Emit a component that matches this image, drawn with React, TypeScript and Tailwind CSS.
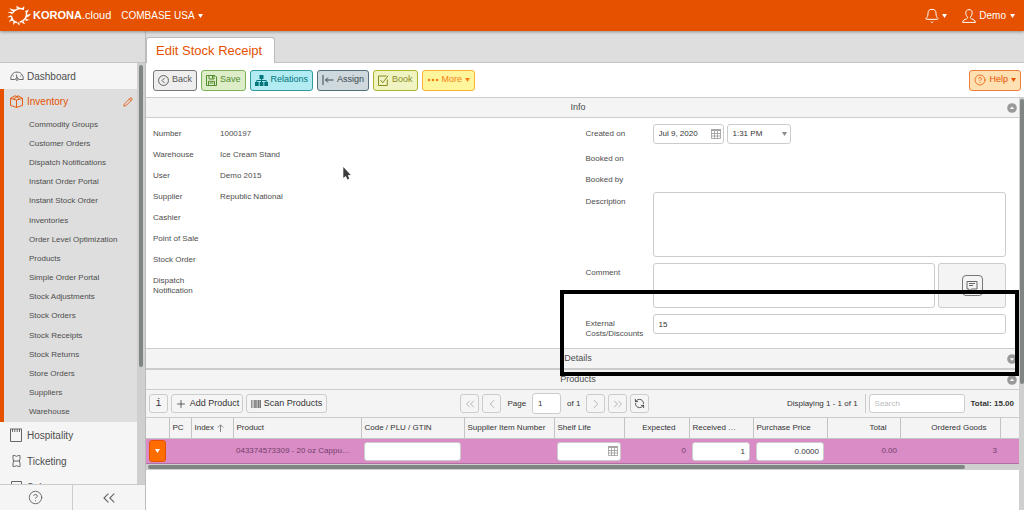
import React, { useState } from "react";
import {
  Bell,
  ChevronLeft,
  ChevronRight,
  ChevronsLeft,
  ChevronsRight,
  CircleHelp,
  Pencil,
  Plus,
  RefreshCcw,
} from "lucide-react";

// ---------- Small helpers ----------
const cx = (...list: (string | boolean | undefined)[]) => list.filter(Boolean).join(" ");

// ---------- Data ----------
const inventoryItems = [
  "Commodity Groups",
  "Customer Orders",
  "Dispatch Notifications",
  "Instant Order Portal",
  "Instant Stock Order",
  "Inventories",
  "Order Level Optimization",
  "Products",
  "Simple Order Portal",
  "Stock Adjustments",
  "Stock Orders",
  "Stock Receipts",
  "Stock Returns",
  "Store Orders",
  "Suppliers",
  "Warehouse",
];

const infoRows = [
  ["Number", "1000197"],
  ["Warehouse", "Ice Cream Stand"],
  ["User", "Demo 2015"],
  ["Supplier", "Republic National"],
  ["Cashier", ""],
  ["Point of Sale", ""],
  ["Stock Order", ""],
  ["Dispatch Notification", ""],
];

// ---------- Icons ----------
const Caret = ({ className }: { className?: string }) => (
  <svg viewBox="0 0 5 4" className={cx("h-[4px] w-[5px] shrink-0", className)} fill="currentColor" aria-hidden="true">
    <path d="M0 0h5L2.5 4z" />
  </svg>
);

// Corona ring with flames swept clockwise
const Logo = () => (
  <svg viewBox="0 0 26 22" className="h-[22px] w-[26px] shrink-0" aria-hidden="true">
    <path
      d="M6.500 8C8.500 4.200 13.500 2.600 17.500 4.300M20.300 7.500c1.300 4-1.600 8.600-6.600 9.800M11 17.400C7.800 16.800 5.600 14.400 5.600 11.300"
      fill="none"
      stroke="#fff"
      strokeWidth="1.500"
    />
    <path
      d="M8 6.500Q4.500 6 3.500 3q2.500 1.800 5.500 1.600zM11.500 4.200Q10 2.500 10.600.6q1.200 2 3.600 2.400zM15.500 3.500q1.600-.6 2.600-2.500.6 2.400-.4 4zM19 6q2 0 3.800-1.800-.6 2.800-2.400 4.200zM20.800 9.600q2 .2 4.200-1-1.200 2.800-3.800 3.600zM20.500 13.400q1.200 1.400 3.400 1.200-2.400 1.600-4.800.8zM17.600 16.200q.2 1.600 1.800 2.800-2.600-.2-3.800-1.800zM13.500 17.400q-.6 1.800.4 3.400-2.400-1.200-2.800-3.200zM10 17.200q-2 .8-2.600 3-.8-2.400.6-4zM7 15.200q-2.400.2-3.800 2.400 0-2.800 2.600-4.400zM5.600 12.400q-2.200-.8-4.400.6 1.400-2.800 4.200-2.800zM6.200 9.400q-1.600-2-4.400-2 2.400-1.400 5 .2z"
      fill="#fff"
    />
  </svg>
);

const GaugeIcon = () => (
  <svg viewBox="0 0 14 10" className="h-[10px] w-[14px]" fill="none" stroke="#666" aria-hidden="true">
    <path d="M.8 8.500C.4 4.200 3.200 1.100 7 1.100s6.600 3.100 6.200 7.400H9.200M.8 8.500h4M7.200 7.500 6.400 3.500M2.600 4.300l1.200 1M11.400 4.300l-1.200 1" />
    <circle cx="7" cy="8" r="1.300" />
  </svg>
);

const BoxIcon = () => (
  <svg viewBox="0 0 14 14" className="mr-[4px] h-[13px] w-[13px] shrink-0" fill="none" stroke="currentColor" aria-hidden="true">
    <path d="M.6 3.600 7 5.500l6.400-1.900v7.600L7 13.400.6 11.200zM7 5.500v7.900M.6 3.600 5.400.8 7 1.600 8.600.8l4.800 2.800M3.600 4.400 8.200 1.400M10.400 4.400 7 1.600" />
  </svg>
);

const HospitalityIcon = () => (
  <svg viewBox="0 0 12 14" className="h-[14px] w-[12px]" fill="none" stroke="#666" aria-hidden="true">
    <path d="M.5 1v12.500h11V1M0 1h12M2.500 1v3M4.800 1v3M7.200 1v3M9.500 1v3" />
  </svg>
);

const TicketIcon = () => (
  <svg viewBox="0 0 9 12" className="ml-[2px] h-[12px] w-[9px]" fill="none" stroke="#666" aria-hidden="true">
    <path d="M1 .5h1.500q2 1.600 4 0H8v3.200q-1.400 2.300 0 4.600v3.200H6.500q-2-1.600-4 0H1V8.300q1.400-2.300 0-4.600zM2 6h5" />
  </svg>
);

const ReceiptIcon = () => (
  <svg viewBox="0 0 11 12" className="ml-px h-[12px] w-[11px]" fill="none" stroke="#666" aria-hidden="true">
    <path d="M.5 3V.5h10V3M1.500 3v8.500h8V3M3 3.500h5M3 6h5" />
  </svg>
);

const UserIcon = () => (
  <svg viewBox="0 0 14 14" className="h-[14px] w-[14px]" fill="none" stroke="currentColor" aria-hidden="true">
    <path d="M7 .6c-2.200 0-3.400 1.500-3.200 3.600.2 1.800.8 3 1.800 3.900.2 1-.2 1.400-1.200 1.800-2 .7-3.600 1.300-3.800 3.500h12.800c-.2-2.200-1.800-2.800-3.800-3.500-1-.4-1.400-.8-1.200-1.800 1-.9 1.600-2.100 1.800-3.900C10.400 2.100 9.200.6 7 .6z" />
  </svg>
);

const BackIcon = () => (
  <svg viewBox="0 0 12 12" className="h-[11px] w-[11px]" fill="none" stroke="currentColor" aria-hidden="true">
    <circle cx="6" cy="6" r="5.400" />
    <path d="M7.200 3.200 4.400 6l2.800 2.800" />
  </svg>
);

const SaveIcon = () => (
  <svg viewBox="0 0 11 11" className="h-[11px] w-[11px]" fill="none" stroke="currentColor" aria-hidden="true">
    <path d="M.5.5h8.500l1.500 1.500v8.500H.5zM3 .5v3.500h5V.5M6.500 1v2.500M2.500 10.500V6.300h6v4.200M3.500 8h4" />
  </svg>
);

const RelationsIcon = () => (
  <svg viewBox="0 0 13 11" className="h-[11px] w-[13px]" aria-hidden="true">
    <path d="M4.500 0h4v4h-4zM0 7h3.700v4H0zM4.700 7h3.700v4H4.700zM9.300 7H13v4H9.300z" fill="currentColor" />
    <path d="M6.500 4v3M1.800 7V5.500h9.400V7" stroke="currentColor" fill="none" />
  </svg>
);

const AssignIcon = () => (
  <svg viewBox="0 0 12 10" className="h-[10px] w-[12px]" fill="none" stroke="currentColor" aria-hidden="true">
    <path d="M1 0v10M11.500 5H3.500M6 2.500 3.500 5 6 7.500" />
  </svg>
);

const BookIcon = () => (
  <svg viewBox="0 0 11 11" className="h-[11px] w-[11px]" fill="none" stroke="currentColor" aria-hidden="true">
    <path d="M8.500 1h-8v9.500h8.800V4.500M2.500 5l2.200 2.800L10 .8" />
  </svg>
);

const DotsIcon = () => (
  <svg viewBox="0 0 12 4" className="h-[4px] w-[12px]" fill="currentColor" aria-hidden="true">
    <circle cx="2" cy="2" r="1.300" />
    <circle cx="6" cy="2" r="1.300" />
    <circle cx="10" cy="2" r="1.300" />
  </svg>
);

const CalendarIcon = () => (
  <svg viewBox="0 0 10 10" className="h-[10px] w-[10px] shrink-0" fill="none" aria-hidden="true">
    <path d="M0 1h10" stroke="#888" strokeWidth="1.500" />
    <path d="M.5 2v7.500h9V2M.5 4.500h9M.5 7h9M3.500 2v7.500M6.500 2v7.500" stroke="#999" strokeWidth="0.800" />
  </svg>
);

const CommentIcon = () => (
  <svg viewBox="0 0 12 12" className="h-[12px] w-[12px]" fill="none" stroke="#666" aria-hidden="true">
    <path d="M1 1.500h10v7.500H5.500L3 11V9H1zM3 3.500h6M3 5.500h4" />
  </svg>
);

const BarcodeIcon = () => (
  <svg viewBox="0 0 10 8" className="h-[8px] w-[10px]" fill="#777" aria-hidden="true">
    <path d="M0 0h.8v8H0zM1.600 0h.8v8h-.8zM3.200 0h1.600v8H3.200zM5.300 0h1.200v8H5.300zM7 0h1v8H7zM8.400 0H10v8H8.400z" />
  </svg>
);

const SortArrow = () => (
  <svg viewBox="0 0 7 8" className="h-[8px] w-[7px]" fill="none" stroke="#888" aria-hidden="true">
    <path d="M3.500 8V1M.8 3.500 3.500.8l2.700 2.700" />
  </svg>
);

// Round collapse / expand handle of a section header
const Toggle = ({ open }: { open: boolean }) => (
  <svg viewBox="0 0 10 10" className="h-[10px] w-[10px]" aria-hidden="true">
    <circle cx="5" cy="5" r="4.800" fill="#999" />
    <path d={open ? "M2.800 6h4.400L5 3.400z" : "M2.800 4.200h4.400L5 6.800z"} fill="#fff" />
  </svg>
);

// ---------- UI atoms ----------
const NavItem = ({ icon, label }: { icon: React.ReactNode; label: string }) => (
  <a href="#" className="flex h-[26px] shrink-0 items-center pl-[10px] text-[10px]">
    <span className="w-[17px]">{icon}</span>
    {label}
  </a>
);

const ToolButton = ({ className, children }: { className: string; children: React.ReactNode }) => (
  <button className={cx("flex h-[21px] items-center gap-[3px] rounded-[3px] border px-1 text-[9px]", className)}>
    {children}
  </button>
);

const GridButton = ({ label, className, children }: { label?: string; className?: string; children: React.ReactNode }) => (
  <button
    aria-label={label}
    className={cx("flex h-[19px] items-center justify-center gap-[3px] rounded-[3px] border border-[#ccc] bg-[#f5f5f5]", className)}
  >
    {children}
  </button>
);

const SectionHeader = ({ title, open, className }: { title: string; open: boolean; className?: string }) => (
  <div className={cx("flex items-center bg-[#f4f4f4] pr-[2px]", className)}>
    <h2 className="flex-1 pl-[3px] text-center text-[9px]">{title}</h2>
    <button aria-label={"Toggle " + title} className="leading-none">
      <Toggle open={open} />
    </button>
  </div>
);

const box = "rounded-[3px] border border-[#ccc] bg-white text-[8px] text-[#333] outline-none";

// ---------- Page parts ----------
const TopBar = () => (
  <header className="relative z-10 flex h-[31px] shrink-0 items-center bg-[#e65100] pr-[9px] pl-[6px] text-[10px] text-white shadow-[0_1px_3px_rgba(0,0,0,0.35)]">
    <Logo />
    <span className="ml-px text-[11px] font-bold">
      KORONA<span className="font-normal">.cloud</span>
    </span>
    <button className="ml-[10px] flex items-center gap-[3px]">
      COMBASE USA <Caret />
    </button>
    <button className="ml-auto flex items-center gap-[2px]" aria-label="Notifications">
      <Bell size={16} strokeWidth={1.5} />
      <Caret />
    </button>
    <button className="ml-[15px] flex items-center gap-[3px]">
      <UserIcon />
      Demo
      <Caret className="ml-px" />
    </button>
  </header>
);

const Sidebar = () => (
  <aside className="flex w-[146px] shrink-0 flex-col border-r border-[#bbb]">
    <div className="h-[32px] shrink-0 border-b border-[#c4c4c4] bg-[#dedede]" />
    <div className="flex min-h-0 flex-1">
      <nav className="flex min-w-0 flex-1 flex-col overflow-hidden bg-[#f5f5f5]">
        <NavItem icon={<GaugeIcon />} label="Dashboard" />
        <div className="shrink-0 border-l-4 border-[#e65100] bg-[#dedede]">
          <a href="#" className="flex h-[25px] items-center pr-1 pl-[6px] text-[10px] text-[#e65100]">
            <BoxIcon />
            Inventory
            <Pencil size={10} strokeWidth={2} className="ml-auto" />
          </a>
          <ul className="grid h-77 auto-rows-fr pt-px pl-[25px] text-[8px]">
            {inventoryItems.map((item) => (
              <li key={item} className="flex items-center">
                <a href="#">{item}</a>
              </li>
            ))}
          </ul>
        </div>
        <NavItem icon={<HospitalityIcon />} label="Hospitality" />
        <NavItem icon={<TicketIcon />} label="Ticketing" />
        <NavItem icon={<ReceiptIcon />} label="Sales" />
      </nav>
      <div className="w-[8px] shrink-0 bg-[#cfcfcf] px-[2px]">
        <div className="mt-[2px] h-[302px] rounded-full bg-[#7f8484]" />
      </div>
    </div>
    <div className="grid h-[26px] shrink-0 grid-cols-2 border-t border-[#ccc] bg-[#f5f5f5] text-[#666]">
      <button aria-label="Help" className="flex items-center justify-center border-r border-[#ccc]">
        <CircleHelp size={15} strokeWidth={1.5} />
      </button>
      <button aria-label="Collapse menu" className="flex items-center justify-center">
        <ChevronsLeft size={20} strokeWidth={1.300} />
      </button>
    </div>
  </aside>
);

const InfoForm = () => {
  const [description, setDescription] = useState("");
  const [comment, setComment] = useState("");
  const [costs, setCosts] = useState("15");

  return (
    <div className="grid grid-cols-2 gap-x-3 border-t border-[#ccc] pt-[6px] pr-[13px] pb-[9px] pl-[7px] text-[8px] leading-[10px]">
      <dl className="pt-[5px]">
        {infoRows.map(([label, value]) => (
          <div key={label} className="mb-[11px] flex">
            <dt className="w-[67px] shrink-0 pr-3">{label}</dt>
            <dd>{value}</dd>
          </div>
        ))}
      </dl>
      <div>
        <div className="flex">
          <label htmlFor="created" className="w-[67px] shrink-0 pt-[5px]">Created on</label>
          <div className={cx(box, "flex h-[20px] w-[71px] items-center pr-[2px] pl-[5px]")}>
            <input id="created" defaultValue="Jul 9, 2020" className="min-w-0 flex-1 outline-none" />
            <CalendarIcon />
          </div>
          <div className="relative ml-[3px]">
            <select aria-label="Created time" className={cx(box, "h-[20px] w-[64px] appearance-none pl-[5px]")}>
              <option>1:31 PM</option>
            </select>
            <Caret className="pointer-events-none absolute top-2 right-[4px] text-[#888]" />
          </div>
        </div>
        <div className="mt-[10px]">Booked on</div>
        <div className="mt-[11px]">Booked by</div>
        <div className="mt-[7px] flex">
          <label htmlFor="description" className="w-[67px] shrink-0 pt-[5px]">Description</label>
          <textarea
            id="description"
            value={description}
            onChange={(e) => setDescription(e.target.value)}
            className={cx(box, "h-[65px] min-w-0 flex-1 resize-none p-1")}
          />
        </div>
        <div className="mt-[6px] flex">
          <label htmlFor="comment" className="w-[67px] shrink-0 pt-[5px]">Comment</label>
          <textarea
            id="comment"
            value={comment}
            onChange={(e) => setComment(e.target.value)}
            className={cx(box, "h-[45px] min-w-0 flex-1 resize-none p-1")}
          />
          <div className="ml-[3px] flex w-[68px] items-center justify-center rounded-[3px] border border-[#ccc] bg-[#f4f4f4]">
            <button aria-label="Add comment" className="flex h-[21px] w-[21px] items-center justify-center rounded-[4px] border border-[#777]">
              <CommentIcon />
            </button>
          </div>
        </div>
        <div className="mt-[6px] flex">
          <label htmlFor="costs" className="w-[67px] shrink-0 pt-[5px]">External Costs/Discounts</label>
          <input
            id="costs"
            value={costs}
            onChange={(e) => setCosts(e.target.value)}
            className={cx(box, "h-[20px] min-w-0 flex-1 px-[5px]")}
          />
        </div>
      </div>
    </div>
  );
};

const GridToolbar = () => (
  <div className="flex h-[28px] items-center border-t border-[#ccc] bg-[#f4f4f4] pr-[5px] pl-[3px] text-[9px] text-[#333]">
    <GridButton className="w-[19px] font-['Liberation_Mono',monospace] text-[10px]">i</GridButton>
    <GridButton className="ml-[3px] w-[72px]">
      <Plus size={12} strokeWidth={1.500} />
      Add Product
    </GridButton>
    <GridButton className="ml-[3px] w-[81px]">
      <BarcodeIcon />
      Scan Products
    </GridButton>
    <div className="ml-auto flex items-center gap-[3px] pr-1 text-[8px]">
      <GridButton label="First page" className="w-[19px] text-[#aaa]"><ChevronsLeft size={14} strokeWidth={1.500} /></GridButton>
      <GridButton label="Previous page" className="w-[19px] text-[#aaa]"><ChevronLeft size={14} strokeWidth={1.500} /></GridButton>
      <label htmlFor="page" className="px-[3px]">Page</label>
      <input id="page" defaultValue="1" className={cx(box, "h-[21px] w-[29px] px-[5px]")} />
      <span className="px-[3px]">of 1</span>
      <GridButton label="Next page" className="w-[19px] text-[#aaa]"><ChevronRight size={14} strokeWidth={1.500} /></GridButton>
      <GridButton label="Last page" className="w-[19px] text-[#aaa]"><ChevronsRight size={14} strokeWidth={1.500} /></GridButton>
      <GridButton label="Refresh" className="w-[19px]"><RefreshCcw size={11} strokeWidth={1.800} /></GridButton>
    </div>
    <span className="ml-auto text-[8px]">Displaying 1 - 1 of 1</span>
    <div className="ml-[7px] h-[19px] w-px bg-[#ccc]" />
    <input aria-label="Search" placeholder="Search" className={cx(box, "ml-[3px] h-[19px] w-[96px] px-[5px] placeholder:text-[#bbb]")} />
    <span className="ml-[6px] text-[8px] font-bold">Total: 15.00</span>
  </div>
);

const th = "h-[21px] border-r border-b border-[#c4c4c4] px-[3px] text-left font-normal whitespace-nowrap";

const ProductTable = () => (
  <table className="w-full table-fixed border-t border-[#ccc] text-[8px] text-[#333]">
    <colgroup>
      <col className="w-[23px]" />
      <col className="w-[22px]" />
      <col className="w-[42px]" />
      <col className="w-[128px]" />
      <col className="w-[103px]" />
      <col className="w-[90px]" />
      <col className="w-[70px]" />
      <col className="w-[65px]" />
      <col className="w-[64px]" />
      <col className="w-[74px]" />
      <col className="w-[73px]" />
      <col className="w-[100px]" />
      <col />
    </colgroup>
    <thead className="bg-[#f4f4f4]">
      <tr>
        <th className={th} aria-label="Actions" />
        <th className={cx(th, "text-center")}>PC</th>
        <th className={th}>
          <span className="flex items-center gap-[3px]">Index <SortArrow /></span>
        </th>
        <th className={th}>Product</th>
        <th className={th}>Code / PLU / GTIN</th>
        <th className={th}>Supplier Item Number</th>
        <th className={th}>Shelf Life</th>
        <th className={cx(th, "pr-[13px] text-right")}>Expected</th>
        <th className={th}>Received …</th>
        <th className={th}>Purchase Price</th>
        <th className={cx(th, "pr-[13px] text-right")}>Total</th>
        <th className={cx(th, "pr-[13px] text-right")}>Ordered Goods</th>
        <th className="border-b border-[#c4c4c4]" aria-label="Spacer" />
      </tr>
    </thead>
    <tbody>
      <tr className="h-[25px] border-b border-[#b070a0] bg-[#d98cc6] text-[#75406a]">
        <td className="pl-[3px]">
          <button aria-label="Row actions" className="flex h-[22px] w-[17px] items-center justify-center rounded-[3px] border border-[#e65100] bg-[#ff6d00] text-white">
            <Caret />
          </button>
        </td>
        <td />
        <td />
        <td className="px-[3px] whitespace-nowrap">043374573309 - 20 oz Cappu…</td>
        <td className="px-[3px]"><input aria-label="Code / PLU / GTIN" className={cx(box, "block h-[19px] w-full px-1")} /></td>
        <td />
        <td className="px-[3px]">
          <div className={cx(box, "flex h-[19px] items-center pr-[2px]")}>
            <input aria-label="Shelf Life" className="min-w-0 flex-1 pl-1 outline-none" />
            <CalendarIcon />
          </div>
        </td>
        <td className="px-[3px] text-right">0</td>
        <td className="px-[3px]"><input aria-label="Received" defaultValue="1" className={cx(box, "block h-[19px] w-full px-1 text-right")} /></td>
        <td className="px-[3px]"><input aria-label="Purchase Price" defaultValue="0.0000" className={cx(box, "block h-[19px] w-full px-1 text-right")} /></td>
        <td className="px-[3px] text-right">0.00</td>
        <td className="px-[3px] text-right">3</td>
        <td />
      </tr>
    </tbody>
  </table>
);

export default function App() {
  return (
    <div className="flex h-screen flex-col overflow-hidden bg-white font-['Liberation_Sans',Arial,sans-serif] text-[#4d4d4d]">
      <TopBar />
      <div className="flex min-h-0 flex-1">
        <Sidebar />
        <main className="flex min-w-0 flex-1 flex-col">
          <div className="flex h-[32px] shrink-0 items-end border-b border-[#c4c4c4] bg-[#dedede]">
            <h1 className="-mb-px flex h-[26px] items-center rounded-t-[3px] border border-b-0 border-[#bbb] bg-white pr-[12px] pl-[9px] text-[13px] text-[#e65100]">
              Edit Stock Receipt
            </h1>
          </div>

          <div className="flex h-[35px] shrink-0 items-center gap-[4px] border-b border-[#ccc] pr-[3px] pl-[7px]">
            <ToolButton className="border-[#777] bg-[#eee] text-[#555]"><BackIcon />Back</ToolButton>
            <ToolButton className="border-[#7cb35a] bg-[#dcedc8] text-[#558b2f]"><SaveIcon />Save</ToolButton>
            <ToolButton className="border-[#2f9a9f] bg-[#b2ebf2] text-[#00757c]"><RelationsIcon />Relations</ToolButton>
            <ToolButton className="border-[#546e7a] bg-[#cfd8dc] text-[#37474f]"><AssignIcon />Assign</ToolButton>
            <ToolButton className="border-[#afb42b] bg-[#f0f4c3] text-[#8a8a1f]"><BookIcon />Book</ToolButton>
            <ToolButton className="border-[#f9b233] bg-[#fff59d] text-[#f57f17]"><DotsIcon />More <Caret /></ToolButton>
            <ToolButton className="ml-auto border-[#ef7f3a] bg-[#ffe0b2] text-[#e65100]">
              <CircleHelp size={12} strokeWidth={1.500} />Help <Caret />
            </ToolButton>
          </div>

          <div className="flex min-h-0 flex-1">
            <div className="min-w-0 flex-1 overflow-hidden">
              <div className="relative">
                <SectionHeader title="Info" open className="h-[19px]" />
                <InfoForm />
                <SectionHeader title="Details" open={false} className="h-[22px] border-t border-b-2 border-[#ccc]" />
                {/* highlighted area around external costs and details */}
                <div className="pointer-events-none absolute right-0 -bottom-[6px] h-[86px] w-[459px] border-4 border-black" />
              </div>
              <SectionHeader title="Products" open className="h-[19px]" />
              <GridToolbar />
              <ProductTable />
              <div className="h-[6px] bg-[#cfcfcf] px-[2px] pt-px">
                <div className="h-[4px] w-[94%] rounded-full bg-[#7f8484]" />
              </div>
            </div>
            <div className="w-[5px] shrink-0 bg-[#cfcfcf] pl-px">
              <div className="mt-px h-[285px] rounded-full bg-[#7f8484]" />
            </div>
          </div>
        </main>
      </div>

      {/* mouse pointer */}
      <svg viewBox="0 0 8 13" className="pointer-events-none absolute top-[167px] left-[343px] h-[13px] w-[8px]" aria-hidden="true">
        <path d="M.3 0v11l2.500-2 1.700 3.500 1.800-.9L4.700 8.300l3-.4z" fill="#3c3c3c" />
      </svg>
    </div>
  );
}
